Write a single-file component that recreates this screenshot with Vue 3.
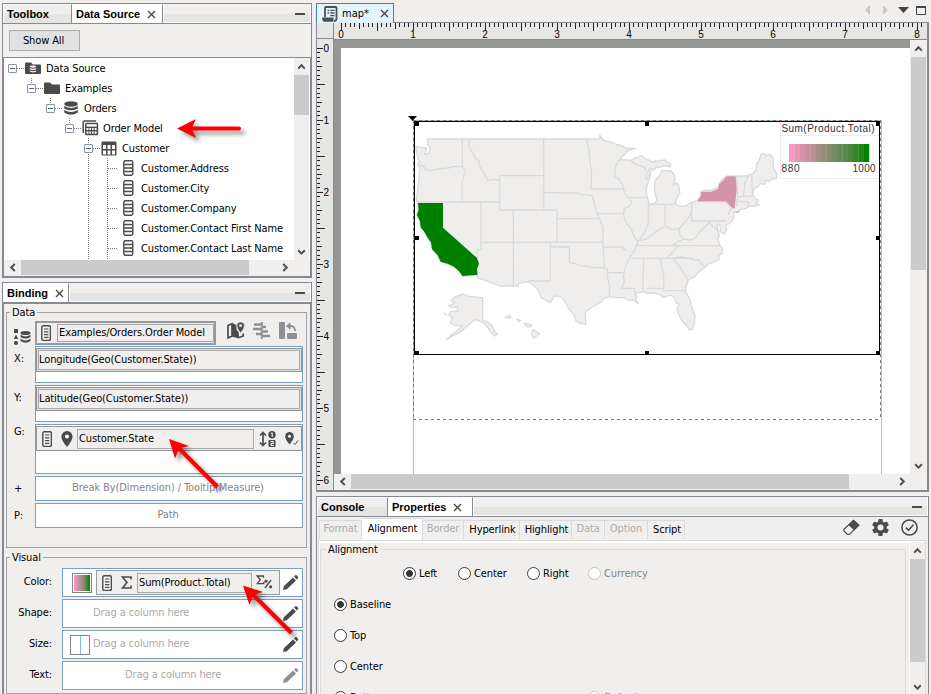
<script setup>
import { h } from 'vue'

const D = '#4b4b4b'
const icons = {
  close: `<path d="M1 1L8 8M8 1L1 8" stroke="#444" stroke-width="1.3" fill="none"/>`,
  up: `<path d="M1.2 5.6L4.5 2.2L7.8 5.6" stroke="#505050" stroke-width="2" fill="none"/>`,
  down: `<path d="M1.2 2.2L4.5 5.6L7.8 2.2" stroke="#505050" stroke-width="2" fill="none"/>`,
  left: `<path d="M5.8 1L2.2 4.5L5.8 8" stroke="#505050" stroke-width="2" fill="none"/>`,
  right: `<path d="M2.2 1L5.8 4.5L2.2 8" stroke="#505050" stroke-width="2" fill="none"/>`,
  root: `<path d="M0 2.5Q0 1.5 1 1.5H6L8 3.5H15Q16 3.5 16 4.5V12Q16 13 15 13H1Q0 13 0 12Z" fill="${D}"/><g fill="#fff"><ellipse cx="8" cy="5.6" rx="3.2" ry="1.1"/><path d="M4.8 7Q8 8.6 11.2 7V8.2Q8 9.8 4.8 8.2Z"/><path d="M4.8 9.4Q8 11 11.2 9.4V10.6Q8 12.2 4.8 10.6Z"/></g>`,
  folder: `<path d="M0 2.5Q0 1.5 1 1.5H6L8 3.5H15Q16 3.5 16 4.5V12Q16 13 15 13H1Q0 13 0 12Z" fill="${D}"/>`,
  db: `<g fill="${D}"><ellipse cx="8" cy="3" rx="6.8" ry="2.7"/><path d="M1.2 5Q8 9 14.8 5V7.4Q8 11.2 1.2 7.4Z"/><path d="M1.2 9Q8 13 14.8 9V11.4Q8 16 1.2 11.4Z"/></g>`,
  model: `<path d="M1.2 13V2Q1.2 1 2.2 1H14" stroke="${D}" stroke-width="1.5" fill="none"/><rect x="3" y="2.8" width="13.2" height="12.4" rx="1.2" fill="${D}"/><g fill="#fff"><rect x="4.5" y="4.2" width="10.2" height="2.4"/><rect x="4.5" y="8" width="2" height="2"/><rect x="7.4" y="8" width="1.6" height="2"/><rect x="10" y="8" width="1.6" height="2"/><rect x="12.6" y="8" width="2" height="2"/><rect x="4.5" y="11.4" width="2" height="2.3"/><rect x="7.4" y="11.4" width="1.6" height="2.3"/><rect x="10" y="11.4" width="1.6" height="2.3"/><rect x="12.6" y="11.4" width="2" height="2.3"/></g>`,
  table: `<rect x=".5" y=".5" width="15" height="14" rx="1.2" fill="${D}"/><g fill="#fff"><rect x="2" y="4" width="3" height="4"/><rect x="6.5" y="4" width="3" height="4"/><rect x="11" y="4" width="3" height="4"/><rect x="2" y="9.5" width="3" height="4"/><rect x="6.5" y="9.5" width="3" height="4"/><rect x="11" y="9.5" width="3" height="4"/></g>`,
  column: `<rect x=".8" y=".8" width="9" height="14.4" rx="1.4" fill="#fff" stroke="${D}" stroke-width="1.4"/><path d="M1 4.5H10M1 8H10M1 11.5H10" stroke="${D}" stroke-width="1.3"/>`,
  dim: `<rect x=".8" y=".8" width="8.6" height="14.6" rx="1.4" fill="#f4f3f2" stroke="${D}" stroke-width="1.4"/><path d="M3 4H7.4M3 6.8H7.4M3 9.6H7.4M3 12.4H7.4" stroke="${D}" stroke-width="1.2"/>`,
  source: `<g fill="${D}"><rect x="0" y="0" width="4" height="4"/><path d="M2 5.5L4.3 10H-.3Z"/><circle cx="2" cy="14" r="2.1"/><ellipse cx="11.5" cy="4" rx="5" ry="2"/><path d="M6.5 5.8Q11.5 9 16.5 5.8V8Q11.5 11 6.5 8Z"/><path d="M6.5 9.8Q11.5 13 16.5 9.8V12Q11.5 15.4 6.5 12Z"/></g>`,
  map: `<path d="M1 3.5L5 1.8V14.2L1 15.8ZM11.2 15.8L16.2 14V11.5" fill="none" stroke="${D}" stroke-width="1.7"/><path d="M5 1L9.5 3V7.5L11.8 10.5V16.6L5 14.5Z" fill="${D}"/><path d="M13.6 0A3.7 3.7 0 0 1 17.4 3.7Q17.2 7 13.6 11Q10.1 7 9.9 3.7A3.7 3.7 0 0 1 13.6 0Z" fill="${D}" stroke="#f0efee" stroke-width=".6"/><circle cx="13.6" cy="3.7" r="1.4" fill="#fff"/>`,
  swap: `<g stroke="#8f9095" stroke-width="2.4" fill="none"><path d="M1 2.5H8M0 7H8M3 12H8M10 5H13M10 9.5H15M10 14H17"/><path d="M8.8 0V17" stroke-width="2"/></g>`,
  rotate: `<g fill="#8f9095"><rect x="0" y="0" width="6" height="17" rx="1"/><rect x="8" y="11" width="10" height="6" rx="1"/><path d="M7 4L11.5 0V8Z"/></g><path d="M10 4Q16 3.5 16 9" stroke="#8f9095" stroke-width="1.8" fill="none"/>`,
  pin: `<path d="M6 0A5.6 5.6 0 0 1 11.6 5.6Q11.4 10 6 16Q.6 10 .4 5.6A5.6 5.6 0 0 1 6 0Z" fill="${D}"/><circle cx="6" cy="5.6" r="2" fill="#fff"/>`,
  sort: `<path d="M4 2V14M1 4.5L4 1.5L7 4.5M1 11.5L4 14.5L7 11.5" stroke="${D}" stroke-width="1.7" fill="none"/><circle cx="13" cy="3.7" r="3.7" fill="${D}"/><path d="M12 2.5L13.2 1.8V6" stroke="#fff" fill="none"/><rect x="9.5" y="9" width="7" height="7" rx=".8" fill="${D}"/><path d="M11.5 10.5H14.3V12.5H12V14.5H14.8" stroke="#fff" fill="none"/>`,
  pincheck: `<path d="M4.5 0A4.3 4.3 0 0 1 8.8 4.3Q8.6 8 4.5 12.5Q.4 8 .2 4.3A4.3 4.3 0 0 1 4.5 0Z" fill="${D}"/><circle cx="4.5" cy="4.3" r="1.5" fill="#fff"/><path d="M8.5 11L10 12.5L13 8.5" stroke="${D}" fill="none"/>`,
  sigma: `<path d="M10 3.5V1H1.5L6 6.5L1.5 12H10V9.5" stroke="${D}" stroke-width="1.6" fill="none"/>`,
  sigmapct: `<path d="M7.5 2.8V1H1.3L4.3 4.8L1.3 8.6H7.8V7" stroke="${D}" stroke-width="1.3" fill="none"/><path d="M9 13L15 5" stroke="${D}" stroke-width="1.4"/><circle cx="10" cy="6.2" r="1.6" fill="${D}"/><circle cx="14.6" cy="11.8" r="1.6" fill="${D}"/>`,
  pencil: `<path d="M0 15L.8 11.2L10 2.4L13 5.4L3.8 14.3ZM11 1.5L12.3.3Q13 -.2 13.6.3L15 1.8Q15.5 2.4 15 3L13.8 4.4Z" fill="currentColor"/>`,
  script: `<path d="M3 11V2Q3 1 4 1H13.5Q14.5 1 14.5 2V12.5Q14.5 15 12 15" fill="none" stroke="#505050" stroke-width="1.8"/><path d="M0 11.5H11.5V15.8H1.5Q0 15 0 11.5Z" fill="#505050"/><path d="M5.5 4.3H7M8.3 4.3H12.5M5.500 7H7M8.3 7H12.5M8.3 9.6H12.5" stroke="#505050" stroke-width="1.3"/>`,
  eraser: `<path d="M.8 10.5L10.5 1.3L16 6.2L6.2 15.4H4.6L.8 12Z" fill="#f4f3f2" stroke="${D}" stroke-width="1.1"/><path d="M5.4 6.1L10.5 1L16.2 6L11 11.2Z" fill="${D}"/>`,
  gear: `<g fill="${D}"><circle cx="8.5" cy="8.5" r="6.2"/><g><rect x="6.3" y="0" width="4.4" height="17" rx="1"/><rect x="6.3" y="0" width="4.4" height="17" rx="1" transform="rotate(60 8.5 8.5)"/><rect x="6.3" y="0" width="4.4" height="17" rx="1" transform="rotate(120 8.5 8.5)"/></g></g><circle cx="8.5" cy="8.5" r="3" fill="#f0efee"/>`,
  ok: `<circle cx="8.5" cy="8.5" r="7.6" fill="none" stroke="${D}" stroke-width="1.5"/><path d="M4.8 8.6L7.5 11.3L12.4 5.8" fill="none" stroke="${D}" stroke-width="1.6"/>`,
}
const Ic = (p) => h('svg', { width: p.w, height: p.h, viewBox: `0 0 ${p.w} ${p.h}`, innerHTML: icons[p.n] })
Ic.props = ['n', 'w', 'h']

const tree = [
  { l: 0, n: 'root', w: 16, h: 14, t: 'Data Source' },
  { l: 1, n: 'folder', w: 16, h: 14, t: 'Examples' },
  { l: 2, n: 'db', w: 16, h: 15, t: 'Orders' },
  { l: 3, n: 'model', w: 17, h: 16, t: 'Order Model' },
  { l: 4, n: 'table', w: 16, h: 15, t: 'Customer' },
  ...['Address', 'City', 'Company', 'Contact First Name', 'Contact Last Name'].map((f) => ({ l: 5, n: 'column', w: 11, h: 16, t: 'Customer.' + f })),
]
const visual = [
  { k: 'Shape:', c: 'shape' },
  { k: 'Size:', c: 'size' },
  { k: 'Text:', c: 'text' },
]
const tabs = [
  { t: 'Format', w: 43, off: 1 },
  { t: 'Alignment', w: 61, on: 1 },
  { t: 'Border', w: 41, off: 1 },
  { t: 'Hyperlink', w: 56 },
  { t: 'Highlight', w: 52 },
  { t: 'Data', w: 33, off: 1 },
  { t: 'Option', w: 43, off: 1 },
  { t: 'Script', w: 37 },
]
const ticks = (n) => Array.from({ length: n }, (_, i) => ({ p: Math.floor(i * 4.5), s: i % 16 === 0 ? 7 : i % 8 === 0 ? 8 : i % 4 === 0 ? 6 : 4 }))
const hTicks = ticks(130)
const vTicks = ticks(98)
const ramp = ['#fc96c8', '#e896b4', '#d892ac', '#c891a0', '#bc9096', '#a88e82', '#988c7c', '#888c70', '#748c64', '#648c58', '#588a4c', '#46883c', '#34862c', '#208418', '#008000']

const coast = 'M68 72H585L584 60L591 70L597 76L620 82L635 88L650 92L665 100L692 100L670 106L654 122L641 136L652 134L665 135L680 136L690 129L700 127L710 122L718 130L730 134L742 141L752 138L765 137L780 135L788 143L796 146L797 156L780 152L765 157L755 156L745 166L735 160L730 170L722 184L724 195L729 185L737 170L734 190L728 206L724 220L725 240L731 260L731 268L748 266L756 255L750 235L748 212L751 195L760 185L766 178L770 166L785 167L798 168L808 180L810 196L805 210L815 204L821 212L825 235L818 245L812 260L812 267L825 275L842 272L860 262L878 256L888 242L885 232L895 226L920 226L940 216L943 205L953 192L965 183H1027L1035 178L1042 178L1053 165L1055 145L1062 138L1068 118L1078 116L1083 122L1092 118L1103 124L1106 160L1115 175V190L1100 192L1092 200L1082 195L1078 208L1066 205L1060 215L1048 220L1043 236L1049 250L1060 255L1053 265L1063 270L1045 275L1035 272L1025 279L1008 283L1000 289L985 290L987 300L984 313L975 325L962 330L965 342L958 358L948 350L944 330L936 325L938 345L943 362L938 370L945 392L953 400L951 415L940 422L943 432L925 442L912 445L900 457L882 470L870 485L850 495L843 515L842 530L850 545L855 555L860 575L870 600L868 625L862 642L853 645L845 632L833 620L822 600L815 585L823 568L814 562L806 545L795 540L783 545L774 548L765 538L745 534L725 535L714 530L700 533L690 538L697 545L691 552L700 565L684 555L674 557L661 552L658 547L640 548L612 545L597 550L588 561L568 573L560 577L543 588L540 604L543 628L525 625L512 616L506 598L490 580L482 562L470 548L455 543L445 545L438 562L425 558L408 547L400 525L385 511L370 500L340 505V513H285L217 488L215 480L174 485L165 468L148 455L130 448L108 440L98 420L82 405L78 390L70 370L60 350L47 335L43 315L35 300L39 285L38 262L34 255L38 225L42 190L44 160L38 150L43 140L36 118L32 95L52 98L65 99L60 118L72 115L75 98L68 88Z'
const borders = 'M43 150L55 152L60 162L75 167L100 162L130 159L142 155H172V72M172 155L181 165L171 205V261M38 261H284M193 72V98L205 115L211 130L222 137V150L232 168L240 180L250 197L262 193L282 195M284 182H416M284 182V285H456V380M416 72V285M228 261V403L217 405L216 430M325 285V382M228 382H594M325 382V512M436 385V498H370M436 396H493V442L510 446L525 452L545 454L562 458L585 457L606 462M418 233L520 234L530 239L548 239L562 243M545 72L552 105L556 150L560 175L558 222M558 222H655M456 311H580M562 243L573 285L582 310L594 335V382L598 457M575 296H653M596 396H655L657 404L665 404M606 473H656M606 460L608 490L614 515L612 545M641 136L631 155L630 185L642 192L655 215L658 235L672 248H725M678 139L700 152L715 155L725 168M672 248L680 262L672 275L658 280L655 300L665 325L680 345L685 360L697 378L700 390M700 378L692 400L683 415L672 430L662 455L655 485L658 500L650 520H688L690 538M680 430H865M716 430L713 530M765 430L776 480V520M723 520H775L776 527H840M730 268V325L720 350L705 372L697 378M731 268H812M780 268V330M700 378L728 370L750 352L780 333L800 344L820 342L832 330L850 310L860 290V262M860 262V318H962M878 260H962L982 280L975 285L970 300M822 342L825 360L838 372L855 375L870 370L885 350L905 330L915 322L905 318M838 372L818 380L802 392M690 392H948M820 393L800 415L785 430M802 430L830 425L855 430L870 435H880L900 457M805 432L820 450L840 480L850 495M910 320L925 335L945 350M995 183L998 235L995 275M998 245L1045 243M1030 183L1020 205L1015 243M1040 180L1042 235M998 260H1030V275'
const ca = 'M39 264H114V338L216 429L222 446L216 462L218 479L172 483L163 470L147 455L128 446L107 440L98 421L81 402L78 382L66 365L58 351L47 337L45 318L36 300L41 285Z'
const ny = 'M878 256L888 243L888 230L918 230L939 222L942 208L953 198L965 184H992L995 224L991 262L989 281L978 275L963 259H878Z'
const alaska = 'M138 556L151 545L175 537L192 544L233 548V615L251 623L261 632L268 648L277 657L270 663L260 655L250 640L238 625L225 618L208 614L193 628L180 638L165 652L148 660L123 675L142 658L160 645L172 633L150 631L135 624L143 610L132 600L136 590L157 588L158 576L140 578L131 571L145 567L150 563Z'
</script>

<template>
  <div class="app">
    <div class="left">
      <section class="pane src">
        <header class="head">
          <div class="tab w68">Toolbox</div>
          <div class="tab on w90">Data Source<Ic n="close" w="9" h="9" /></div>
          <div class="fill"></div><i class="min"></i>
        </header>
        <div class="tool"><button>Show All</button></div>
        <div class="treebox">
          <div class="treemain">
            <div class="tree">
              <svg class="guides" width="290" height="201" viewBox="0 0 290 201">
                <g stroke="#777" stroke-dasharray="1 1" shape-rendering="crispEdges">
                  <path d="M13 10.5H21M32 30.5H40M51 50.5H59M70 70.5H78M89 90.5H97M27.5 20V26M46.5 40V46M65.5 60V66M84.5 80V201M103.5 100V201M104 110.5H114M104 130.5H114M104 150.5H114M104 170.5H114M104 190.5H114" />
                </g>
              </svg>
              <div v-for="r in tree" :key="r.t" class="trow" :class="'l' + r.l">
                <i class="exp" :class="{ none: r.l === 5 }"></i>
                <span class="ticon"><Ic :n="r.n" :w="r.w" :h="r.h" /></span>
                <span class="tname">{{ r.t }}</span>
              </div>
            </div>
            <div class="vs"><span class="sb"><Ic n="up" w="9" h="8" /></span><i class="th t1"></i><span class="grow"></span><span class="sb"><Ic n="down" w="9" h="8" /></span></div>
          </div>
          <div class="hs"><span class="hb"><Ic n="left" w="8" h="9" /></span><i class="ht h1"></i><span class="grow"></span><span class="hb gap"><Ic n="right" w="8" h="9" /></span></div>
        </div>
      </section>

      <section class="pane bind">
        <header class="head">
          <div class="tab on w65">Binding<Ic n="close" w="9" h="9" /></div>
          <div class="fill"></div><i class="min"></i>
        </header>
        <div class="bbody">
          <div class="fs data">
            <span class="lg">Data</span>
            <div class="drow top">
              <Ic class="srcico" n="source" w="17" h="17" />
              <div class="combo"><Ic n="dim" w="10" h="16" /><span>Examples/Orders.Order Model</span></div>
              <div class="dtools"><Ic n="map" w="18" h="18" /><Ic n="swap" w="18" h="18" /><Ic n="rotate" w="18" h="18" /></div>
            </div>
            <div class="drow"><label>X:</label><div class="field f37"><div class="pill full"><span>Longitude(Geo(Customer.State))</span></div></div></div>
            <div class="drow"><label>Y:</label><div class="field f37"><div class="pill full"><span>Latitude(Geo(Customer.State))</span></div></div></div>
            <div class="drow g"><label>G:</label><div class="field f50"><div class="pill geo"><Ic n="dim" w="10" h="16" /><Ic n="pin" w="12" h="16" /><span>Customer.State</span><Ic n="sort" w="17" h="16" /><Ic n="pincheck" w="14" h="14" /></div></div></div>
            <div class="drow mid"><label>+</label><div class="field f25">Break By(Dimension) / Tooltip(Measure)</div></div>
            <div class="drow mid"><label>P:</label><div class="field f25">Path</div></div>
          </div>
          <div class="fs vis">
            <span class="lg">Visual</span>
            <div class="vrow">
              <label>Color:</label>
              <div class="vf color"><i class="sw"></i>
                <div class="pill cpill"><Ic n="dim" w="10" h="16" /><Ic n="sigma" w="12" h="13" /><span>Sum(Product.Total)</span><Ic n="sigmapct" w="17" h="15" /></div>
                <Ic class="pen" n="pencil" w="16" h="15" />
              </div>
            </div>
            <div v-for="v in visual" :key="v.k" class="vrow">
              <label>{{ v.k }}</label>
              <div class="vf" :class="v.c"><i v-if="v.c === 'size'" class="sizebox"></i><span class="ph">Drag a column here</span><Ic class="pen" n="pencil" w="16" h="15" /></div>
            </div>
          </div>
        </div>
      </section>
    </div>

    <div class="right">
      <div class="docs">
        <div class="doc"><Ic n="script" w="16" h="16" /><span>map*</span><Ic n="close" w="9" h="9" /></div>
        <svg class="nav" width="64" height="12" viewBox="0 0 64 12"><path d="M6 1V11L1 6ZM19 1V11L24 6Z" fill="#c8c8c8" /><path d="M34 3H45L39.5 9Z" fill="#444" /><path d="M52.5 3.5H61.5V10.5H52.5Z" stroke="#444" fill="none" /><path d="M52 3H62" stroke="#444" stroke-width="2" /></svg>
      </div>
      <div class="editor">
        <div class="hr">
          <i class="corner"></i>
          <svg width="594" height="16" viewBox="334 23 594 16">
            <g shape-rendering="crispEdges"><rect v-for="t in hTicks" :key="t.p" :x="341 + t.p" y="23" width="1" :height="t.s" fill="#222" /></g>
            <text v-for="n in 9" :key="n" :x="341 + (n - 1) * 72" y="38" text-anchor="middle">{{ n - 1 }}</text>
          </svg>
        </div>
        <div class="erow">
          <svg class="vr" width="16" height="451" viewBox="317 39 16 451">
            <g shape-rendering="crispEdges"><rect v-for="t in vTicks" :key="t.p" x="317" :y="48 + t.p" :width="t.s - (t.s === 8 ? 0 : 1)" height="1" fill="#222" /></g>
            <text v-for="n in 7" :key="n" x="323.5" :y="51.5 + (n - 1) * 72">{{ n - 1 }}</text>
          </svg>
          <div class="canvas">
            <div class="crow">
              <div class="page">
                <svg width="569" height="426" viewBox="341 48 569 426">
                  <g transform="translate(405 115) scale(.33333)" stroke-linejoin="round">
                    <g fill="#efeeed" stroke="#dadada" stroke-width="4">
                      <path :d="coast" /><path :d="borders" fill="none" /><path :d="alaska" />
                      <path d="M300 607L314 601L318 607L310 610ZM336 612L347 617L343 621ZM357 625L378 628L380 635L368 636ZM384 643L403 657L394 664L386 670L380 658ZM115 594L125 600" />
                    </g>
                    <path :d="ca" fill="#008000" /><path :d="ny" fill="#d592ab" /><path d="M987 293L1007 287L998 293Z" fill="#d592ab" />
                  </g>
                  <g fill="none" shape-rendering="crispEdges">
                    <path d="M413.5 120V474M881.5 120V474M413 120.5H881" stroke="#c0c0c0" />
                    <path d="M413.5 120V419M880.5 120V419M413 120.5H881M413 419.5H881" stroke="#777" stroke-dasharray="3 3" />
                    <rect x="414.5" y="121.5" width="465" height="233" stroke="#000" />
                    <path d="M780.5 123V178.5H879M780 135.5H879" stroke="#ededed" />
                  </g>
                  <path d="M408 116H417L412.5 121Z" />
                  <path d="M415 122h4v4h-4zM645 122h4v4h-4zM876 122h4v4h-4zM415 236h4v4h-4zM876 236h4v4h-4zM415 351h4v4h-4zM645 351h4v4h-4zM876 351h4v4h-4z" shape-rendering="crispEdges" />
                  <rect v-for="(c, i) in ramp" :key="c" :x="789 + i * 5.333" y="144" width="5.6" height="18" :fill="c" />
                  <g class="maptext"><text x="781.5" y="132" textLength="93">Sum(Product.Total)</text><text x="781.5" y="172" textLength="18">880</text><text x="852.5" y="172" textLength="23">1000</text></g>
                </svg>
              </div>
              <div class="vs"><span class="sb"><Ic n="up" w="9" h="8" /></span><i class="th t2"></i><span class="grow"></span><span class="sb"><Ic n="down" w="9" h="8" /></span></div>
            </div>
            <div class="hs"><span class="hb"><Ic n="left" w="8" h="9" /></span><i class="ht h2"></i><span class="grow"></span><span class="hb gap"><Ic n="right" w="8" h="9" /></span></div>
          </div>
        </div>
      </div>

      <section class="pane props">
        <header class="head">
          <div class="tab w70">Console</div>
          <div class="tab on w85">Properties<Ic n="close" w="9" h="9" /></div>
          <div class="fill"></div><i class="min"></i>
        </header>
        <div class="subs">
          <div v-for="t in tabs" :key="t.t" class="sub" :class="{ off: t.off, on: t.on }" :style="{ width: t.w + 'px' }">{{ t.t }}</div>
          <span class="grow"></span>
          <div class="ptools"><Ic n="eraser" w="17" h="17" /><Ic n="gear" w="17" h="17" /><Ic n="ok" w="17" h="17" /></div>
        </div>
        <div class="pbody">
          <div class="align">
            <span class="lg">Alignment</span>
            <div class="radios hz"><label class="r sel r1"><i></i>Left</label><label class="r r2"><i></i>Center</label><label class="r r3"><i></i>Right</label><label class="r dis"><i></i>Currency</label></div>
            <div class="radios"><label class="r sel"><i></i>Baseline</label></div>
            <div class="radios"><label class="r"><i></i>Top</label></div>
            <div class="radios"><label class="r"><i></i>Center</label></div>
            <div class="radios"><label class="r bot"><i></i>Bottom</label><label class="r dis"><i></i>Default</label></div>
          </div>
          <div class="vs pv"><span class="sb"><Ic n="up" w="9" h="8" /></span><i class="th t3"></i><span class="grow"></span><span class="sb"><Ic n="down" w="9" h="8" /></span></div>
        </div>
      </section>
    </div>

    <svg class="arrows" width="931" height="694" viewBox="0 0 931 694">
      <g fill="#f00" stroke="none">
        <path d="M177 128.500L196 119L192.500 126.500H239Q241 126.500 241 128.500Q241 130.500 239 130.500H192.500L196 138Z" />
        <path d="M169 439L189 446L181.300 447.800L219 485.500L216 488.500L178.300 450.500L175 458.500Z" />
        <path d="M243 585.500L263 592L255.500 594.300L293 631.500L290 634.500L252.500 597L249.500 605Z" />
      </g>
    </svg>
  </div>
</template>

<style>
body { margin: 0; overflow: hidden; background: #f0efee; }
</style>
<style scoped>
.app { position: relative; display: flex; width: 931px; height: 694px; overflow: hidden; background: #f0efee; color: #000; font: 11px/14px "DejaVu Sans Condensed", "DejaVu Sans", sans-serif; font-stretch: condensed; letter-spacing: -.11px; white-space: nowrap; }
.app * { box-sizing: border-box; }
svg { display: block; flex: none; }
i { display: block; flex: none; }
.grow { flex: 1; }
.left { width: 316px; flex: none; padding: 3px 4px 0 2px; display: flex; flex-direction: column; gap: 4px; }
.pane { border: 1px solid #858a94; width: 310px; flex: none; display: flex; flex-direction: column; }
.head { height: 20px; flex: none; display: flex; align-items: stretch; border-bottom: 1px solid #858a94; background: linear-gradient(#f0efee 55%, #e4e4e2 55%); position: relative; }
.tab { display: flex; align-items: center; gap: 7px; padding: 0 0 0 3px; border-right: 1px solid #858a94; border-top: 1px solid #fff; border-left: 1px solid #fff; font: bold 11px/14px "Liberation Sans", sans-serif; letter-spacing: 0; }
.tab.on { background: #fff; }
.fill { flex: 1; border: 1px solid #fff; border-top: 0; }
.min { width: 10px; height: 2px; background: #4b4b4b; position: absolute; right: 6px; top: 9px; }
.w68 { width: 69px; }
.w90 { width: 91px; }
.w65 { width: 66px; }
.w70 { width: 71px; }
.w85 { width: 85px; }
.src { height: 275px; }
.tool { height: 33px; flex: none; padding: 6px 0 0 6px; }
button { display: block; width: 71px; height: 21px; border: 1px solid #adadad; background: #e1e1e1; font: inherit; letter-spacing: inherit; padding: 0 2px 0 0; }
.treebox { height: 220px; border: 1px solid #858a94; background: #f0efee; display: flex; flex-direction: column; }
.treemain { height: 202px; display: flex; background: #fff; }
.tree { position: relative; width: 290px; height: 202px; flex: none; overflow: hidden; }
.guides { position: absolute; left: 0; top: 0; }
.trow { height: 20px; display: flex; align-items: center; padding-left: 4px; }
.tname { padding-top: 1px; }
.exp { width: 9px; height: 9px; border: 1px solid #8f9297; background: linear-gradient(#4a63b0, #4a63b0) center / 5px 1px no-repeat #fff; margin-right: 8px; border-radius: 1px; z-index: 1; }
.exp.none { visibility: hidden; }
.ticon { width: 21px; display: flex; }
.l1 { padding-left: 23px; } .l2 { padding-left: 42px; } .l3 { padding-left: 61px; } .l4 { padding-left: 80px; } .l5 { padding-left: 99px; }
.l5 .ticon { padding-left: 3px; }
.vs { width: 15px; flex: none; display: flex; flex-direction: column; background: #f0efee; }
.sb { height: 17px; flex: none; display: flex; align-items: center; justify-content: center; }
.th { background: #cbcbcb; }
.t1 { height: 40px; } .t2 { height: 213px; } .t3 { height: 103px; }
.hs { height: 15px; display: flex; background: #f0efee; }
.hb { width: 17px; display: flex; align-items: center; justify-content: center; }
.hb.gap { margin-right: 17px; }
.ht { background: #cbcbcb; }
.h1 { width: 228px; } .h2 { width: 498px; }
.bind { height: 420px; }
.bbody { border: 1px solid #858a94; border-bottom: 0; padding: 8px 2px 0; height: 400px; flex: none; }
.fs { position: relative; border: 1px solid #a2a2a2; width: 301px; }
.lg { position: absolute; left: 3px; top: -7px; padding: 0 2px; background: #f0efee; }
.data { height: 236px; margin-bottom: 9px; padding-top: 8px; display: flex; flex-direction: column; gap: 2px; }
.vis { height: 137px; padding-top: 10px; display: flex; flex-direction: column; gap: 2px; }
.drow { display: flex; flex: none; }
.drow label { width: 28px; padding: 6px 0 0 7px; }
.drow.g label { padding-top: 1px; }
.top { height: 24px; margin-bottom: -1px; }
.srcico { margin: 8px 4px 0 7px; }
.combo { width: 181px; height: 24px; border: 2px solid #7f9db9; outline: 1px solid #989ba0; outline-offset: -2px; display: flex; align-items: center; gap: 6px; padding-left: 4px; }
.combo span { width: 158px; height: 18px; border: 1px solid #a2a2a8; line-height: 16px; padding-left: 1px; }
.dtools { display: flex; gap: 8px; margin-left: 11px; padding-top: 1px; }
.field { width: 268px; border: 1px solid #7b9ebd; background: #fff; padding-top: 1px; }
.f37 { height: 37px; } .f50 { height: 50px; }
.f25 { height: 25px; padding: 0 2px 1px 0; display: flex; align-items: center; justify-content: center; color: #868686; }
.pill { border: 1px solid #949494; background: #f0efee; display: flex; align-items: center; height: 24px; }
.full { padding: 1px; box-shadow: inset 0 0 0 1px #e0e0e0; }
.full span { width: 263px; height: 20px; border: 1px solid #a9aab0; line-height: 18px; }
.geo { height: 25px; padding-left: 5px; }
.geo span { width: 177px; height: 20px; border: 1px solid #a9aab0; line-height: 18px; margin: 0 5px 0 4px; padding-left: 1px; }
.geo svg:nth-of-type(2) { margin-left: 9px; }
.geo svg:nth-of-type(4) { margin-left: 9px; }
.vrow { display: flex; height: 29px; flex: none; }
.vrow label { width: 55px; padding-right: 10px; text-align: right; line-height: 28px; }
.vf { width: 241px; height: 29px; border: 1px solid #7b9ebd; background: #fff; display: flex; align-items: center; position: relative; }
.pen { position: absolute; right: 3px; top: 6px; color: #4b4b4b; }
.text .pen { color: #8f9095; }
.ph { color: #a8a8a8; padding-bottom: 1px; }
.shape .ph { margin-left: 30px; }
.text .ph { margin-left: 62px; }
.sizebox { width: 20px; height: 20px; margin: 0 3px 0 7px; border: 1px solid #858585; background: linear-gradient(#7fc0dc, #7fc0dc) 9px 0 / 1px 100% no-repeat; }
.sw { width: 20px; height: 20px; margin: 0 4px 0 9px; border: 1px solid #858585; background: linear-gradient(90deg, #fc96c8, #8c8c74 60%, #008000) content-box #fff; padding: 1px; }
.cpill { width: 184px; height: 25px; padding-left: 5px; border-color: #989ba0; }
.cpill svg:nth-of-type(2) { margin-left: 9px; }
.cpill span { width: 115px; height: 20px; border: 1px solid #a9aab0; line-height: 18px; margin: 0 4px 0 4px; padding-left: 1px; }
.right { width: 615px; flex: none; display: flex; flex-direction: column; }
.docs { height: 22px; display: flex; justify-content: space-between; padding-top: 3px; }
.doc { width: 78px; height: 20px; border: 1px solid #3a80ba; border-bottom: 0; background: #e2f5fc; display: flex; align-items: center; padding-left: 5px; z-index: 1; }
.doc span { width: 30px; margin: 0 8px 0 4px; letter-spacing: 0; }
.nav { margin: 1px 3px 0 0; }
.editor { width: 613px; height: 470px; flex: none; border: 1px solid #858a94; border-right-width: 2px; border-bottom-width: 2px; background: #e6e6e4; }
.hr { display: flex; height: 16px; overflow: hidden; }
.hr > svg { margin-left: -1px; }
.hr text, .vr text { font: 10px "Liberation Sans", sans-serif; letter-spacing: 0; }
.corner { width: 17px; height: 16px; border-right: 1px solid #858a94; border-bottom: 1px solid #858a94; margin-right: 1px; }
.erow { display: flex; height: 451px; }
.canvas { border-left: 1px solid #858a94; border-top: 1px solid #858a94; width: 594px; height: 451px; background: #f0efee; }
.crow { display: flex; height: 434px; }
.page { width: 576px; height: 434px; background: #959795; padding: 8px 0 0 7px; margin-right: 1px; flex: none; }
.page svg { background: #fff; }
.maptext { font: 10px "Liberation Sans", sans-serif; fill: #333; letter-spacing: 0; }
.props { width: 613px; height: 204px; margin-top: 4px; }
.subs { height: 23px; flex: none; display: flex; align-items: flex-end; padding: 0 10px 1px 2px; }
.sub { height: 19px; border: 1px solid #dadada; border-width: 1px 1px 0 0; padding: 2px 0 0 2px; text-align: center; }
.sub:first-child { border-left-width: 1px; }
.sub.off { color: #ababab; padding: 1px 0 0; }
.sub.on { background: #fff; height: 22px; margin-bottom: -1px; padding: 3px 0 0 1px; }
.ptools { display: flex; gap: 12px; padding-bottom: 3px; }
.pbody { display: flex; border: 1px solid #dadada; border-bottom: 0; margin: 0 2px 0 1px; box-shadow: inset 0 2px #fff, inset 1px 0 #fff; padding: 1px 0 0 1px; height: 160px; }
.align { position: relative; width: 587px; height: 160px; border: 1px solid #dadada; margin: 7px 3px 0 0; padding-top: 8px; }
.align .lg { left: 5px; top: -7px; }
.radios { height: 31px; display: flex; align-items: center; padding-left: 13px; }
.hz { padding-left: 82px; }
.r { display: flex; align-items: center; gap: 3px; }
.r i { width: 13px; height: 13px; border: 1px solid #3c3c3c; border-radius: 50%; background: #fff; }
.r.sel i { background: radial-gradient(circle, #333 3px, #fff 3.8px); }
.r.dis { color: #858585; }
.r.dis i { border-color: #c4c4c4; }
.r1 { width: 55px; } .r2 { width: 69px; } .r3 { width: 61px; } .bot { width: 254px; }
.pv { box-shadow: -1px 0 #fff; margin-left: 1px; height: 153px; }
.arrows { position: absolute; left: 0; top: 0; filter: drop-shadow(4px 4px 2px rgba(0, 0, 0, .4)); z-index: 5; }
</style>
